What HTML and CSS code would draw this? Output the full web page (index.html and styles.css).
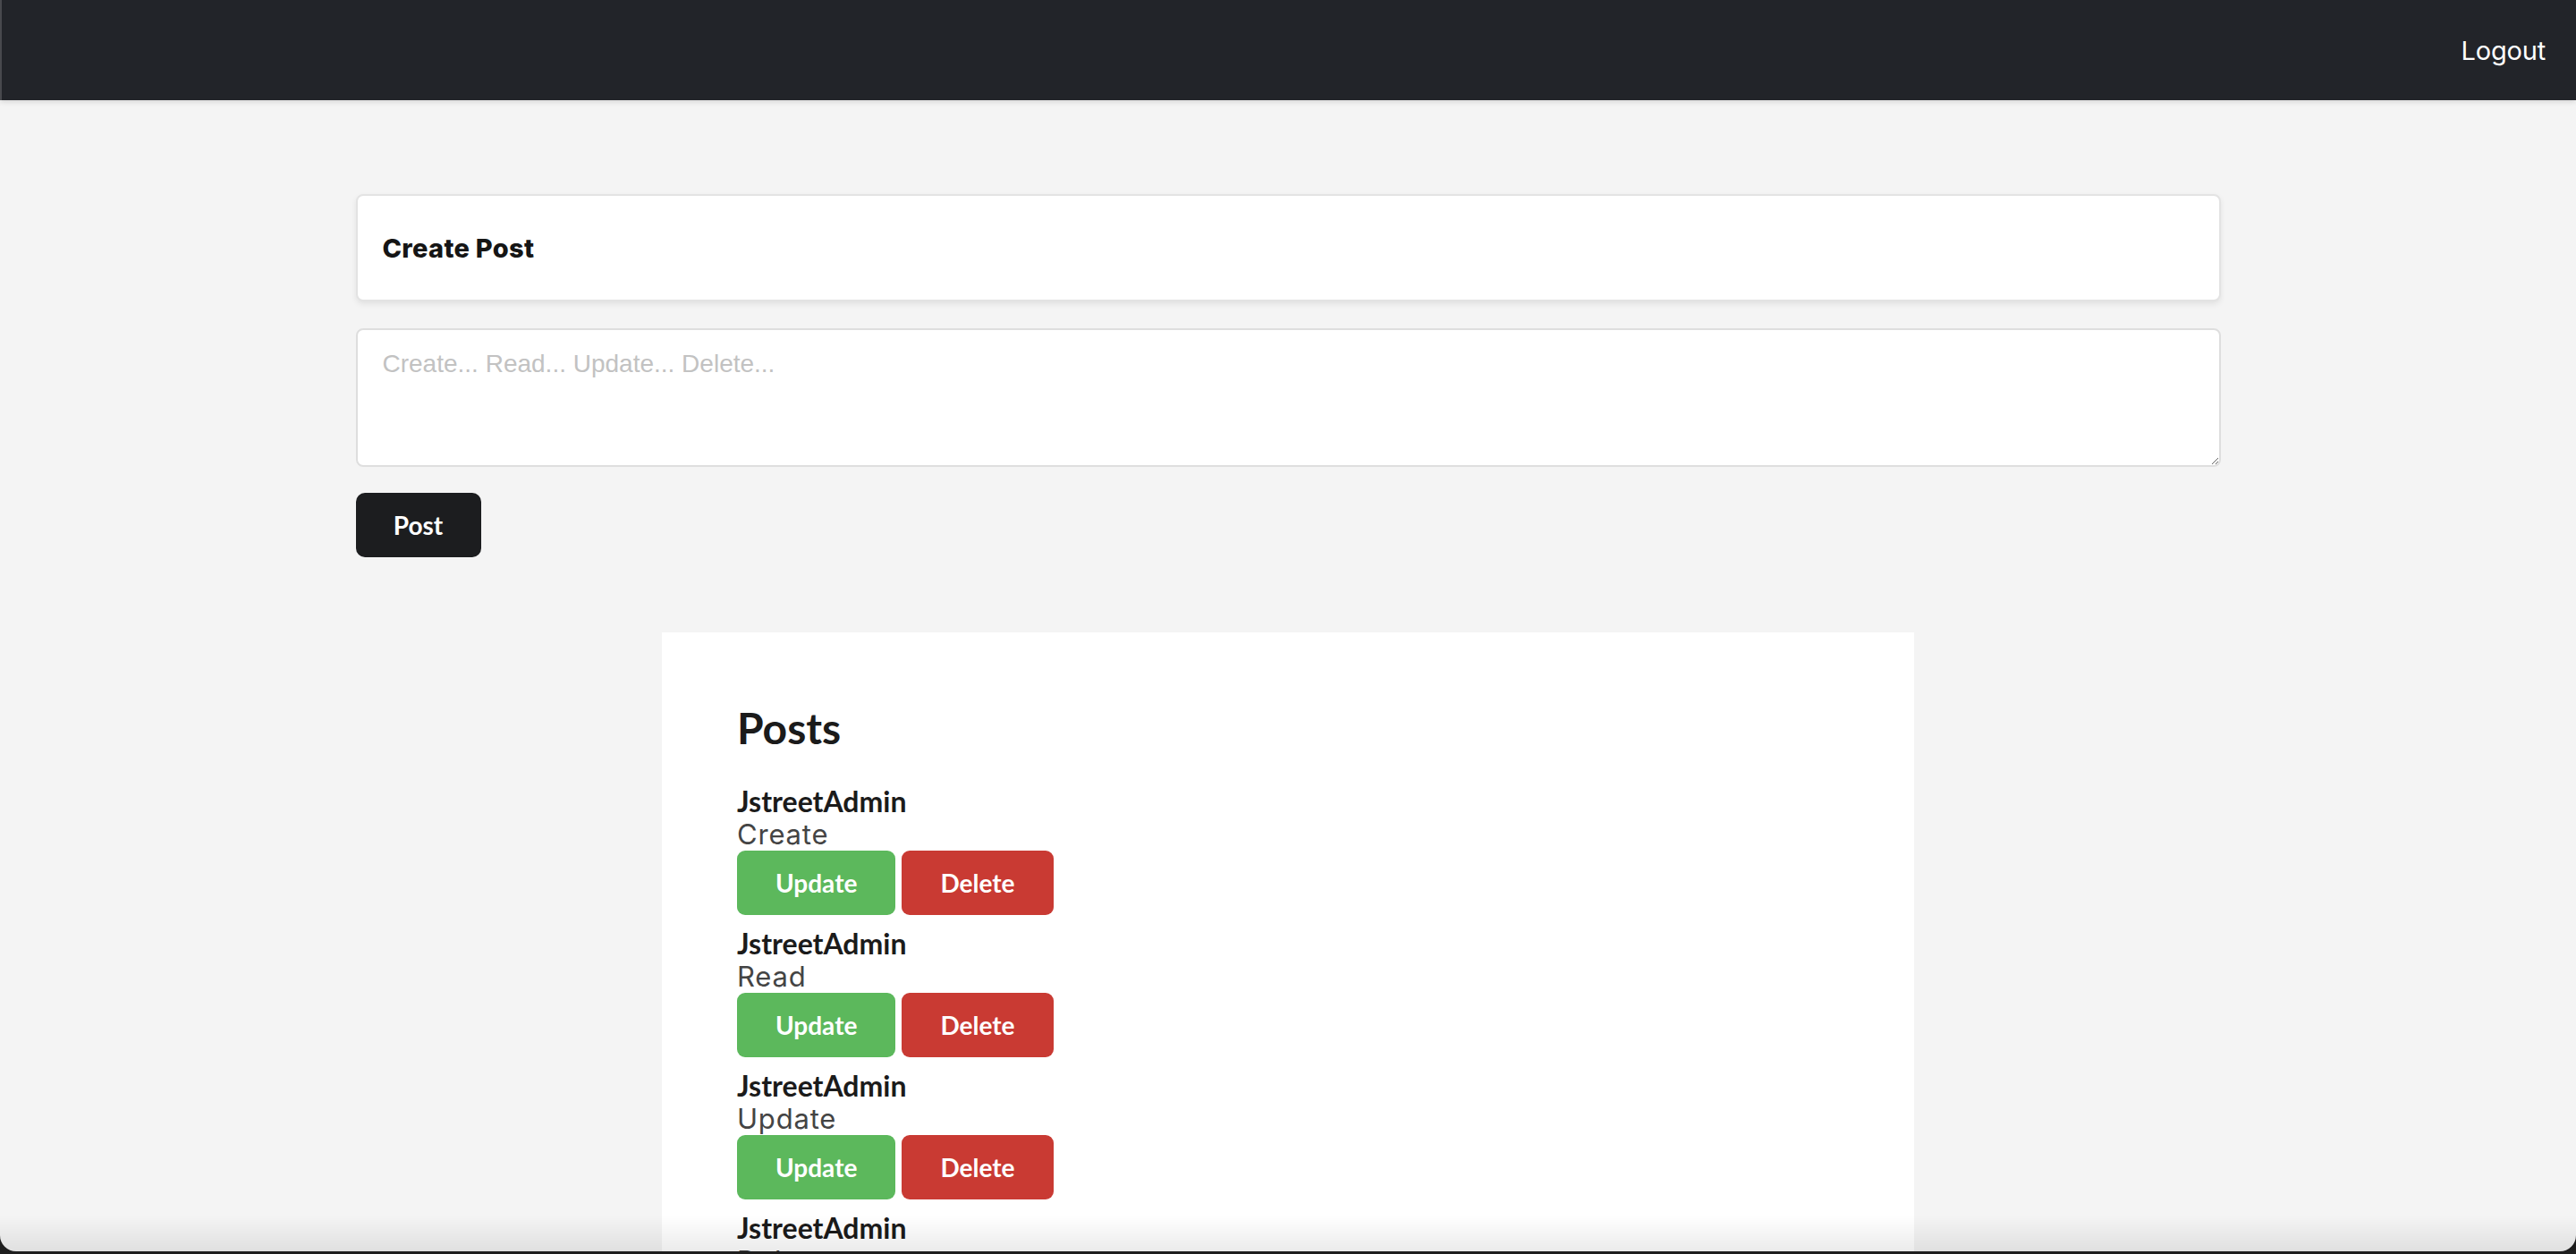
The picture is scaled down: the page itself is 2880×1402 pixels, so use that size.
FILE: index.html
```html
<!DOCTYPE html>
<html lang="en">
<head>
<meta charset="utf-8">
<title>Posts</title>
<link rel="stylesheet" href="styles.css">
</head>
<body>
<nav class="topbar">
  <a class="logout" href="#">Logout</a>
</nav>
<main class="page">
  <section class="composer">
    <div class="composer-card">
      <h1 class="composer-title">Create Post</h1>
    </div>
    <textarea class="composer-input" placeholder="Create... Read... Update... Delete..."></textarea>
    <button class="btn btn-dark" type="button">Post</button>
  </section>
  <section class="posts">
    <h2 class="posts-title">Posts</h2>
    <article class="post">
      <div class="post-author">JstreetAdmin</div>
      <div class="post-body">Create</div>
      <div class="post-actions">
        <button class="btn btn-green" type="button">Update</button>
        <button class="btn btn-red" type="button">Delete</button>
      </div>
    </article>
    <article class="post">
      <div class="post-author">JstreetAdmin</div>
      <div class="post-body">Read</div>
      <div class="post-actions">
        <button class="btn btn-green" type="button">Update</button>
        <button class="btn btn-red" type="button">Delete</button>
      </div>
    </article>
    <article class="post">
      <div class="post-author">JstreetAdmin</div>
      <div class="post-body">Update</div>
      <div class="post-actions">
        <button class="btn btn-green" type="button">Update</button>
        <button class="btn btn-red" type="button">Delete</button>
      </div>
    </article>
    <article class="post">
      <div class="post-author">JstreetAdmin</div>
      <div class="post-body">Delete</div>
      <div class="post-actions">
        <button class="btn btn-green" type="button">Update</button>
        <button class="btn btn-red" type="button">Delete</button>
      </div>
    </article>
  </section>
</main>
<div class="window-frame"></div>
</body>
</html>
```

FILE: styles.css
```css
* { box-sizing: border-box; }

html, body {
  margin: 0;
  padding: 0;
}

body {
  background: #f4f4f4;
  font-family: Inter, "Noto Sans", sans-serif;
  color: #1b1b1b;
}

.topbar {
  height: 112px;
  background: #222429;
  display: flex;
  align-items: center;
  justify-content: flex-end;
  padding: 0 34px 0 0;
  box-shadow: 0 2px 6px rgba(0, 0, 0, 0.12);
  border-left: 2px solid #48494d;
}

.logout {
  color: #ffffff;
  text-decoration: none;
  font-family: Inter, "Noto Sans", sans-serif;
  font-size: 29px;
  font-weight: 400;
  letter-spacing: -0.2px;
}

.page {
  padding-top: 105px;
}

.composer {
  width: 2085px;
  margin: 0 auto;
}

.composer-card {
  height: 120px;
  background: #ffffff;
  border: 2px solid #e3e3e3;
  border-radius: 8px;
  box-shadow: 0 3px 6px rgba(0, 0, 0, 0.08);
  padding: 0 28px;
  display: flex;
  align-items: center;
}

.composer-title {
  margin: 0;
  font-family: Inter, "Noto Sans", sans-serif;
  font-weight: 800;
  font-size: 29px;
  letter-spacing: 0.3px;
  color: #151515;
}

.composer-input {
  display: block;
  width: 100%;
  height: 155px;
  margin-top: 30px;
  padding: 22px 28px;
  border: 2px solid #dedede;
  border-radius: 8px;
  background: #ffffff;
  font-family: "Liberation Sans", Arial, sans-serif;
  font-size: 28px;
  color: #222;
  resize: vertical;
  outline: none;
}

.composer-input::placeholder {
  color: #c2c2c2;
}

.btn {
  font-family: Lato, sans-serif;
  font-weight: 700;
  font-size: 28px;
  color: #ffffff;
  border: none;
  height: 72px;
  padding: 0 43px;
  border-radius: 9px;
  cursor: pointer;
}

.btn-dark {
  display: block;
  margin-top: 29px;
  width: 140px;
  padding: 0;
  background: #1c1d1f;
  border-radius: 10px;
}

.btn-green { background: #5cb85c; }
.btn-red { background: #c93a33; }

.posts {
  width: 1400px;
  margin: 84px auto 0;
  background: #ffffff;
  padding: 78px 84px 80px;
}

.posts-title {
  margin: 0 0 35px;
  font-family: Lato, sans-serif;
  font-weight: 700;
  font-size: 48px;
  line-height: 1.2;
  color: #1b1b1b;
}

.post {
  margin-bottom: 14px;
}

.post-author {
  font-family: Lato, sans-serif;
  font-weight: 700;
  font-size: 32px;
  line-height: 36px;
  color: #1b1b1b;
}

.post-body {
  font-family: Inter, "Noto Sans", sans-serif;
  font-weight: 400;
  font-size: 31px;
  letter-spacing: 0.8px;
  line-height: 37px;
  color: #444444;
}

.post-actions {
  display: flex;
  gap: 7px;
}

.window-frame {
  position: fixed;
  left: 0;
  right: 0;
  top: 0;
  bottom: 3px;
  border-bottom-left-radius: 18px;
  border-bottom-right-radius: 18px;
  box-shadow: 0 0 0 30px #1e1e1e;
  pointer-events: none;
  background: linear-gradient(to bottom, rgba(0, 0, 0, 0) calc(100% - 40px), rgba(0, 0, 0, 0.08) 100%);
}
```
